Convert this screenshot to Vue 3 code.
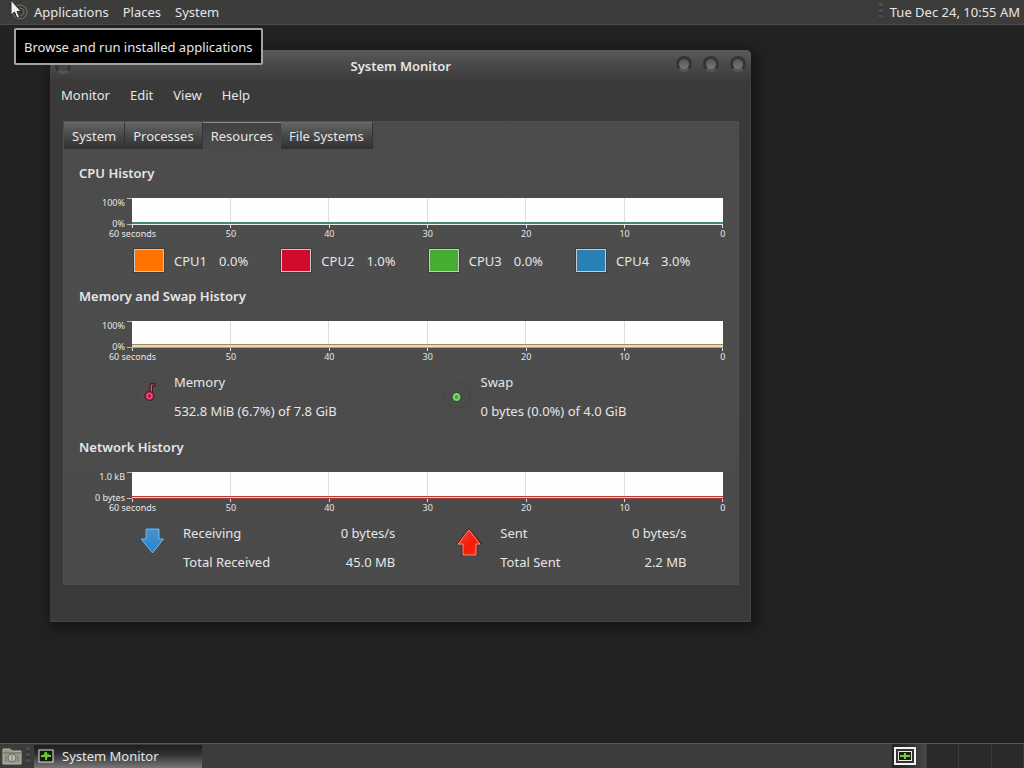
<template>
  <div class="screen">
    <header class="panel top-panel">
      <nav class="main-menu">
        <svg class="menu-logo" viewBox="0 0 20 24" width="20" height="24">
          <circle cx="10" cy="12" r="7" fill="none" stroke="#77776a" stroke-width="1" />
          <circle cx="10" cy="12" r="4" fill="none" stroke="#6a6a5c" stroke-width="1" />
        </svg>
        <button v-for="item in panelMenu" :key="item" type="button">{{ item }}</button>
      </nav>
      <div class="clock">
        <span class="grip"></span>
        <time>Tue Dec 24, 10:55 AM</time>
      </div>
    </header>

    <main class="desktop">
      <section class="window">
        <div class="titlebar">
          <button type="button" class="orb" aria-label="Window menu"></button>
          <h1>System Monitor</h1>
          <div class="window-buttons">
            <button v-for="name in windowButtons" :key="name" type="button" class="orb" :aria-label="name"></button>
          </div>
        </div>
        <nav class="menubar">
          <button v-for="item in windowMenu" :key="item" type="button">{{ item }}</button>
        </nav>

        <div class="notebook">
          <div class="tabs" role="tablist">
            <button
              v-for="tab in tabs"
              :key="tab"
              type="button"
              role="tab"
              :class="{ active: tab === activeTab }"
              :aria-selected="tab === activeTab"
              @click="activeTab = tab"
            >{{ tab }}</button>
          </div>

          <div class="page">
            <section v-for="chart in charts" :key="chart.id" class="history">
              <h2>{{ chart.title }}</h2>
              <div class="chart">
                <div class="y-axis">
                  <span>{{ chart.max }}</span>
                  <span>{{ chart.min }}</span>
                </div>
                <div class="plot-area">
                  <div class="plot" :class="chart.id">
                    <i v-for="n in 6" :key="n"></i>
                  </div>
                  <div class="x-axis">
                    <span v-for="label in seconds" :key="label">{{ label }}</span>
                  </div>
                </div>
              </div>

              <div v-if="chart.id === 'cpu'" class="legend cpus">
                <div v-for="cpu in cpus" :key="cpu.name" class="cpu-item">
                  <button type="button" class="swatch" :style="{ backgroundColor: cpu.color }" :aria-label="cpu.name"></button>
                  <span>{{ cpu.name }}</span>
                  <span>{{ cpu.value }}</span>
                </div>
              </div>

              <div v-else-if="chart.id === 'memory'" class="legend memory-legend">
                <div class="mem-item">
                  <svg viewBox="0 0 32 32" width="32" height="32">
                    <circle cx="16" cy="16" r="13" fill="none" stroke="#484848" />
                    <path d="M16 16V5.500h5v2.500h-2.500v9" fill="#a8224a" stroke="#35232b" stroke-width="1" />
                    <path d="M17.500 7v10" stroke="#e65581" />
                    <circle cx="15.500" cy="18" r="4.500" fill="#cf1f4e" stroke="#3b1c29" />
                    <circle cx="15.500" cy="18" r="2.500" fill="#c0103c" stroke="#ef7c9b" />
                  </svg>
                  <p>Memory</p>
                  <p>532.8 MiB (6.7%) of 7.8 GiB</p>
                </div>
                <div class="mem-item">
                  <svg viewBox="0 0 32 32" width="32" height="32">
                    <circle cx="16" cy="17" r="13" fill="none" stroke="#464646" />
                    <circle cx="15.500" cy="19" r="4.500" fill="#7ed67b" stroke="#253d24" />
                    <circle cx="15.500" cy="19" r="2" fill="#43a83d" />
                  </svg>
                  <p>Swap</p>
                  <p>0 bytes (0.0%) of 4.0 GiB</p>
                </div>
              </div>

              <div v-else class="legend network">
                <div v-for="item in traffic" :key="item.label" class="net-item">
                  <svg v-if="item.dir === 'down'" viewBox="0 0 36 36" width="36" height="36">
                    <defs>
                      <linearGradient id="blue" x1="0" y1="0" x2="0" y2="1">
                        <stop offset="0" stop-color="#4b91c9" />
                        <stop offset="1" stop-color="#2486d6" />
                      </linearGradient>
                    </defs>
                    <path d="M11 5H26V15H31L18.500 31.500L5 15H11Z" fill="#29475d" />
                    <path d="M12 6H25V16H29.500L18.500 30L7 16H12Z" fill="url(#blue)" stroke="#80b9df" stroke-width="1" />
                  </svg>
                  <svg v-else viewBox="0 0 36 36" width="36" height="36">
                    <defs>
                      <linearGradient id="red" x1="0" y1="0" x2="1" y2="1">
                        <stop offset="0" stop-color="#f43e32" />
                        <stop offset="0.6" stop-color="#f51c08" />
                        <stop offset="1" stop-color="#ff3110" />
                      </linearGradient>
                    </defs>
                    <path d="M18 5L32 21H26.500V33H10.500V21H5Z" fill="#6b1d18" />
                    <path d="M18 7L29 21H25V32H12V21H7Z" fill="url(#red)" stroke="#ff8d82" stroke-width="1" />
                  </svg>
                  <dl>
                    <dt>{{ item.label }}</dt>
                    <dd>{{ item.rate }}</dd>
                    <dt>{{ item.totalLabel }}</dt>
                    <dd>{{ item.total }}</dd>
                  </dl>
                </div>
              </div>
            </section>
          </div>
        </div>
      </section>
    </main>

    <footer class="panel taskbar">
      <button type="button" class="show-desktop" aria-label="Files">
        <svg viewBox="0 0 20 18" width="20" height="18">
          <path d="M1 4V2H8L10 4H19V17H1Z" fill="#969886" stroke="#b9baab" />
          <path d="M1 6H19" stroke="#68695f" />
          <circle cx="10" cy="11" r="4" fill="#bdbeb1" stroke="#6c6d62" />
          <path d="M10 8v6M4 9v5M16 9v5" stroke="#777869" />
        </svg>
      </button>
      <span class="grip"></span>
      <button type="button" class="task">
        <svg viewBox="0 0 16 14" width="16" height="14">
          <rect x="1" y="1" width="14" height="12" fill="#101b0c" stroke="#e4e4e4" stroke-width="1" />
          <path d="M3 7H6L7 5L8 9L10 6L11 7H13M8 3v8" fill="none" stroke="#6bc536" stroke-width="2" />
        </svg>
        <span>System Monitor</span>
      </button>
      <div class="workspaces">
        <button v-for="n in 4" :key="n" type="button" :aria-label="'Workspace ' + n">
          <svg v-if="n === 1" viewBox="0 0 22 18" width="22" height="18">
            <rect x="1" y="1" width="20" height="16" fill="#333333" stroke="#f3f3f3" stroke-width="2" />
            <rect x="4.500" y="4.500" width="13" height="9" fill="#17230e" stroke="#e8e8e8" stroke-width="1" />
            <path d="M6 9H16M11 6v6" fill="none" stroke="#7dc841" stroke-width="2" />
          </svg>
        </button>
      </div>
    </footer>

    <div class="tooltip" role="tooltip">Browse and run installed applications</div>
    <svg class="cursor" viewBox="0 0 14 20" width="14" height="20">
      <path d="M1 0L1 15L4.500 12L7 18L9.500 17L7 11.500H11Z" fill="#f2f2f2" stroke="#272727" stroke-width="1" />
    </svg>
  </div>
</template>

<script setup>
import { ref } from 'vue';

const panelMenu = ['Applications', 'Places', 'System'];
const windowMenu = ['Monitor', 'Edit', 'View', 'Help'];
const windowButtons = ['Minimize', 'Maximize', 'Close'];

const tabs = ['System', 'Processes', 'Resources', 'File Systems'];
const activeTab = ref('Resources');

const seconds = ['60 seconds', '50', '40', '30', '20', '10', '0'];

const charts = [
  { id: 'cpu', title: 'CPU History', max: '100%', min: '0%' },
  { id: 'memory', title: 'Memory and Swap History', max: '100%', min: '0%' },
  { id: 'net', title: 'Network History', max: '1.0 kB', min: '0 bytes' }
];

const cpus = [
  { name: 'CPU1', value: '0.0%', color: '#ff7300' },
  { name: 'CPU2', value: '1.0%', color: '#cf0c2c' },
  { name: 'CPU3', value: '0.0%', color: '#45ad32' },
  { name: 'CPU4', value: '3.0%', color: '#2980b6' }
];

const traffic = [
  { dir: 'down', label: 'Receiving', rate: '0 bytes/s', totalLabel: 'Total Received', total: '45.0 MB' },
  { dir: 'up', label: 'Sent', rate: '0 bytes/s', totalLabel: 'Total Sent', total: '2.2 MB' }
];
</script>

<style>
body {
  margin: 0;
  background: #222222;
}
</style>

<style scoped>
.screen {
  position: relative;
  display: flex;
  flex-direction: column;
  min-height: 100vh;
  overflow: hidden;
  background: #222222;
  color: #e6e6e6;
  font-family: "Noto Sans", sans-serif;
  font-size: 13px;
  line-height: 20px;
}
h1, h2, p, dl, dd {
  margin: 0;
  font-size: 13px;
}
h1, h2 {
  font-weight: 600;
}
button {
  padding: 0;
  border: none;
  background: none;
  color: inherit;
  font: inherit;
  white-space: nowrap;
}
.panel {
  display: flex;
  align-items: center;
  box-sizing: border-box;
  height: 25px;
  background: #3c3c3b;
}
.top-panel {
  justify-content: space-between;
  padding: 0 4px 0 10px;
  border-bottom: 1px solid #4b4b4b;
}
.main-menu {
  display: flex;
  align-items: center;
  gap: 14px;
}
.menu-logo {
  margin-right: -10px;
}
.clock {
  display: flex;
  align-items: center;
  gap: 7px;
}
.grip {
  width: 4px;
  height: 18px;
  background: repeating-linear-gradient(#4c4c4c 0 3px, #383838 3px 6px);
}
.desktop {
  position: relative;
  flex: 1;
  min-height: 600px;
}
.window {
  position: absolute;
  top: 25px;
  left: 50px;
  box-sizing: border-box;
  width: 68.5%;
  padding-bottom: 37px;
  border-radius: 5px 5px 0 0;
  background: #3a3a3a;
  box-shadow: 3px 3px 12px 3px #151515, inset 0 1px #5c5c5c, inset -1px -1px #454545;
}
.titlebar {
  display: grid;
  grid-template-columns: 1fr auto 1fr;
  align-items: center;
  height: 32px;
  padding: 0 5px;
  border-radius: 5px 5px 0 0;
  background: linear-gradient(#5a5a5a, #484848 50%, #3a3a3a);
}
.titlebar .orb {
  width: 16px;
  height: 16px;
  box-sizing: border-box;
  border: 3px solid #353535;
  border-bottom-color: #555555;
  border-radius: 50%;
  background: linear-gradient(#555555, #787878);
}
.titlebar > .orb {
  background: #444444;
}
.window-buttons {
  display: flex;
  justify-content: flex-end;
  gap: 11px;
  padding-bottom: 4px;
}
.menubar {
  display: flex;
  align-items: center;
  gap: 20px;
  height: 26px;
  padding: 0 11px;
}
.notebook {
  margin: 13px 12px 0 13px;
  background: linear-gradient(#4b4b4b, #4d4d4d 30%, #4a4a4a);
  border: 1px solid #4f4f4f;
  box-sizing: border-box;
}
.tabs {
  display: flex;
  height: 27px;
}
.tabs button {
  padding: 0 8px;
  border-top: 1px solid #6b6b6b;
  border-right: 1px solid #333333;
  background: linear-gradient(#636363, #484848 50%, #303030);
}
.tabs .active {
  border-top-color: #8a8a8a;
  border-right: none;
  background: linear-gradient(#414141, #4b4b4b);
}
.page {
  display: flex;
  flex-direction: column;
  gap: 14px;
  padding: 14px 15px 12px;
}
.chart {
  display: flex;
  align-items: flex-start;
  gap: 7px;
  margin-top: 14px;
  font-size: 9px;
  line-height: 12px;
}
.y-axis {
  display: flex;
  flex-direction: column;
  justify-content: space-between;
  width: 46px;
  height: 33px;
  text-align: right;
}
.plot-area {
  flex: 1;
  padding-top: 1px;
}
.plot {
  position: relative;
  display: flex;
  height: 27px;
  background: #fefefe;
}
.plot i {
  flex: 1;
  border-right: 1px solid #dddddd;
  height: 24px;
}
.plot i:last-child {
  border-right-color: #ffffff;
}
/* axis line with its value line, and the small ticks below */
.plot::before {
  content: "";
  position: absolute;
  right: 0;
  bottom: 0;
  left: 0;
  height: 1px;
  border-top: 2px solid #448673;
  background: #e8efeb;
}
.plot.memory::before {
  height: 2px;
  border-top: 1px solid #a98659;
  border-bottom: 1px solid #c79a68;
  background: #e2dcb8;
}
.plot.net::before {
  border-top: 1px solid #b73a35;
  border-bottom: 1px solid #a43832;
  background: #f5c8c4;
}
.plot::after {
  content: "";
  position: absolute;
  top: 0;
  bottom: 0;
  left: -5px;
  width: 5px;
  border-top: 1px solid #bbbbbb;
  border-bottom: 1px solid #bbbbbb;
  box-sizing: border-box;
}
.x-axis {
  display: flex;
  justify-content: space-between;
}
.x-axis span {
  display: flex;
  flex-direction: column;
  align-items: center;
  width: 1px;
  height: 15px;
  white-space: nowrap;
}
.x-axis span::before {
  content: "";
  width: 1px;
  height: 3px;
  flex: none;
  background: #dddddd;
}
.legend {
  margin: 9px 0 0 55px;
}
.cpus {
  display: grid;
  grid-template-columns: repeat(4, 1fr);
}
.cpu-item {
  display: flex;
  align-items: center;
  gap: 10px;
}
.cpu-item span + span {
  margin-left: 2px;
}
.swatch {
  width: 30px;
  height: 23px;
  border: 1px solid #c9c9c9;
  outline: 1px solid #3d3d3d;
}
.memory-legend {
  display: grid;
  grid-template-columns: 13fr 12fr;
}
.mem-item {
  display: grid;
  grid-template-columns: 32px auto;
  justify-content: start;
  gap: 9px 8px;
  padding-bottom: 2px;
}
.mem-item svg {
  grid-row: span 2;
  align-self: center;
  justify-self: center;
  margin-top: -6px;
}
.network {
  display: grid;
  grid-template-columns: 10fr 9fr;
  gap: 56px;
  padding-right: 37px;
}
.net-item {
  display: flex;
  gap: 13px;
}
.net-item dl {
  flex: 1;
  display: grid;
  grid-template-columns: auto auto;
  justify-content: space-between;
  row-gap: 9px;
}
.net-item dd {
  text-align: right;
}
.taskbar {
  gap: 4px;
  padding-left: 2px;
  border-top: 1px solid #5a5a5a;
}
.show-desktop svg,
.workspaces svg {
  display: block;
}
.task {
  display: flex;
  align-items: center;
  gap: 8px;
  width: 168px;
  height: 23px;
  padding: 0 4px;
  background: linear-gradient(#1d1d1d, #303030 40%, #777777);
}
.workspaces {
  display: flex;
  width: 132px;
  height: 24px;
  margin-left: auto;
}
.workspaces button {
  flex: 1;
  border-right: 1px solid #3a3a3a;
  background: #2b2b2b;
}
.workspaces button:first-child {
  padding-left: 2px;
  background: linear-gradient(90deg, #222222, #333333 60%, #484848);
}
.tooltip {
  position: absolute;
  top: 28px;
  left: 14px;
  padding: 7px 8px 6px;
  border: 2px solid #a3a3a3;
  border-radius: 2px;
  background: #000000;
}
.cursor {
  position: absolute;
  top: 0;
  left: 10px;
}
</style>
